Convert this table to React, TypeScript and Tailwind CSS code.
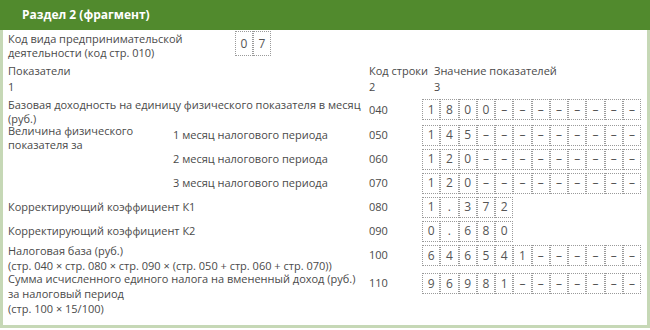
const font = { fontFamily: '"Open Sans", "Noto Sans", sans-serif' }

function Cells({ values }: { values: string[] }) {
  return (
    <div className="flex">
      {values.map((v, i) => (
        <div
          key={i}
          className="w-[18.25px] h-[21px] border border-dotted border-[#9a9a9a] flex items-center justify-center text-[12px] text-[#555]"
        >
          {v}
        </div>
      ))}
    </div>
  )
}

const fill = (digits: string, total = 12) => {
  const arr = digits.split('')
  while (arr.length < total) arr.push('–')
  return arr
}

export default function App() {
  return (
    <div className="w-[650px] h-[330px] bg-white" style={font}>
      <div className="w-[650px] h-[328px] border-x-[3px] border-b-[3px] border-[#c6d8b6] text-[11px] text-[#4a4a4a]">
        <div className="h-[30px] bg-[#518a2d] flex items-center pl-[22px] -mx-[3px]">
          <span className="text-white font-bold text-[12px]">Раздел 2 (фрагмент)</span>
        </div>

        <div className="flex h-[32px] pt-[1px]">
          <div className="w-[232px] pl-[5px] leading-[14px] pt-[1px]">
            <div>Код вида предпринимательской</div>
            <div>деятельности (код стр. 010)</div>
          </div>
          <div className="flex">
            {['0', '7'].map((v) => (
              <div
                key={v}
                className="w-[18px] h-[25px] border border-dotted border-[#9a9a9a] flex items-center justify-center text-[12px] text-[#555]"
              >
                {v}
              </div>
            ))}
          </div>
        </div>

        <div className="flex h-[35px] leading-[16px] pt-[1px]">
          <div className="w-[363px] pl-[5px]">
            <div>Показатели</div>
            <div>1</div>
          </div>
          <div className="w-[68px] pl-[3px]">
            <div>Код строки</div>
            <div>2</div>
          </div>
          <div>
            <div>Значение показателей</div>
            <div>3</div>
          </div>
        </div>

        <div className="flex h-[26px]">
          <div className="w-[363px] pl-[5px] leading-[14px] pt-[1px]">
            <div>Базовая доходность на единицу физического показателя в месяц</div>
            <div>(руб.)</div>
          </div>
          <div className="w-[56px] pl-[3px] flex items-center">040</div>
          <div className="pt-[2px]">
            <Cells values={fill('1800')} />
          </div>
        </div>

        <div className="flex">
          <div className="w-[167px] pl-[5px] leading-[14px] pt-[1px]">
            <div>Величина физического</div>
            <div>показателя за</div>
          </div>
          <div className="flex flex-col">
            {[
              ['1 месяц налогового периода', '050', '145'],
              ['2 месяц налогового периода', '060', '120'],
              ['3 месяц налогового периода', '070', '120'],
            ].map(([l, c, d]) => (
              <div key={c} className="flex h-[24px] items-center">
                <div className="w-[196px] pl-[3px]">{l}</div>
                <div className="w-[56px] pl-[3px]">{c}</div>
                <Cells values={fill(d)} />
              </div>
            ))}
          </div>
        </div>

        <div className="flex h-[24px] items-center">
          <div className="w-[363px] pl-[5px]">Корректирующий коэффициент К1</div>
          <div className="w-[56px] pl-[3px]">080</div>
          <Cells values={['1', '.', '3', '7', '2']} />
        </div>
        <div className="flex h-[24px] items-center">
          <div className="w-[363px] pl-[5px]">Корректирующий коэффициент К2</div>
          <div className="w-[56px] pl-[3px]">090</div>
          <Cells values={['0', '.', '6', '8', '0']} />
        </div>

        <div className="flex h-[28px]">
          <div className="w-[363px] pl-[5px] leading-[15px]">
            <div>Налоговая база (руб.)</div>
            <div className="whitespace-nowrap">(стр. 040 × стр. 080 × стр. 090 × (стр. 050 + стр. 060 + стр. 070))</div>
          </div>
          <div className="w-[56px] pl-[3px] flex items-center h-[25px]">100</div>
          <div className="pt-[2px]">
            <Cells values={fill('646541')} />
          </div>
        </div>

        <div className="flex">
          <div className="w-[363px] pl-[5px] leading-[15px]">
            <div className="whitespace-nowrap">Сумма исчисленного единого налога на вмененный доход (руб.)</div>
            <div>за налоговый период</div>
            <div>(стр. 100 × 15/100)</div>
          </div>
          <div className="w-[56px] pl-[3px] flex items-center h-[25px]">110</div>
          <div className="pt-[2px]">
            <Cells values={fill('96981')} />
          </div>
        </div>
      </div>
    </div>
  )
}
